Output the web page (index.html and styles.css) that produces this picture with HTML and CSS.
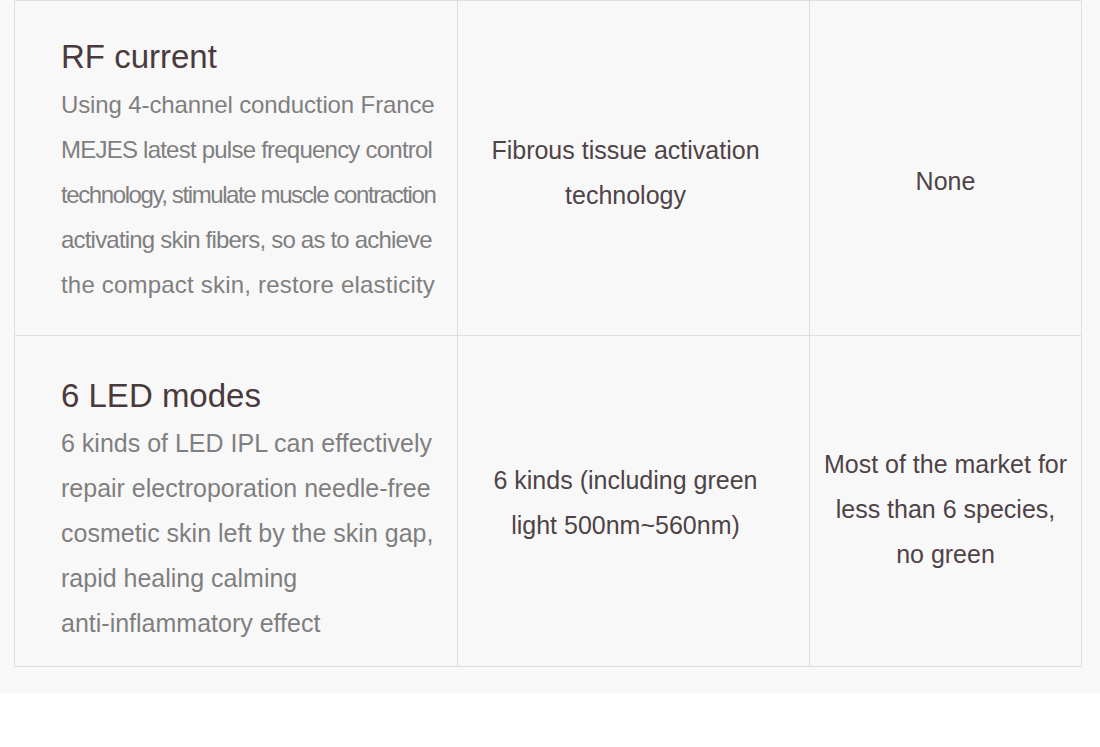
FILE: index.html
```html
<!DOCTYPE html>
<html lang="en">
<head>
<meta charset="utf-8">
<title>Feature comparison</title>
<link rel="stylesheet" href="styles.css">
</head>
<body>
<section class="compare">
  <div class="grid">
    <div class="cell feature feature-a">
      <h3 class="feature-title">RF current</h3>
      <p class="feature-text small"><span class="tight0">Using 4-channel conduction France</span><br><span class="tight1">MEJES latest pulse frequency control</span><br><span class="tight2">technology, stimulate muscle contraction</span><br><span class="tight3">activating skin fibers, so as to achieve</span><br><span class="loose">the compact skin, restore elasticity</span></p>
    </div>
    <div class="cell mid mid-a">
      <p>Fibrous tissue activation<br>technology</p>
    </div>
    <div class="cell side side-a">
      <p>None</p>
    </div>

    <div class="cell feature feature-b">
      <h3 class="feature-title">6 LED modes</h3>
      <p class="feature-text">6 kinds of LED IPL can effectively<br>repair electroporation needle-free<br>cosmetic skin left by the skin gap,<br>rapid healing calming<br>anti-inflammatory effect</p>
    </div>
    <div class="cell mid mid-b">
      <p>6 kinds (including green<br>light 500nm~560nm)</p>
    </div>
    <div class="cell side side-b">
      <p>Most of the market for<br>less than 6 species,<br>no green</p>
    </div>
  </div>
</section>
</body>
</html>
```

FILE: styles.css
```css
html, body {
  margin: 0;
  padding: 0;
  background: #ffffff;
}

body {
  font-family: "Liberation Sans", Arial, sans-serif;
}

.compare {
  background: #f9f8f9;
  padding: 0 0 27px 14px;
}

.grid {
  display: grid;
  grid-template-columns: 443px 352px 272px;
  grid-template-rows: 335px 331px;
  width: 1067px;
  border-left: 1px solid #e2dee0;
  border-top: 1px solid #e2dee0;
}

.cell {
  box-sizing: border-box;
  border-right: 1px solid #e2dee0;
  border-bottom: 1px solid #e2dee0;
}

.cell p {
  margin: 0;
}

.feature {
  padding-left: 46px;
}

.feature-a {
  padding-top: 36px;
}

.feature-b {
  padding-top: 40px;
}

.feature-title {
  margin: 0 0 5px 0;
  font-weight: normal;
  font-size: 33px;
  line-height: 40px;
  color: #4a3a3d;
}

.feature-text {
  font-size: 25px;
  line-height: 45px;
  color: #7f7f7f;
  white-space: nowrap;
}

.feature-text.small {
  font-size: 24px;
}

.tight0 { letter-spacing: -0.12px; }
.tight1 { letter-spacing: -0.77px; }
.tight2 { letter-spacing: -1.4px; }
.tight3 { letter-spacing: -0.8px; }
.loose { letter-spacing: 0.2px; }

.mid,
.side {
  display: flex;
  align-items: center;
  justify-content: center;
  text-align: center;
  font-size: 25px;
  line-height: 45px;
  color: #4e4346;
  white-space: nowrap;
}

.mid {
  padding-right: 16px;
}

.mid-a { padding-top: 10px; }
.side-a { padding-top: 26px; }
.mid-b { padding-top: 4px; }
.side-b { padding-top: 16px; }
```
